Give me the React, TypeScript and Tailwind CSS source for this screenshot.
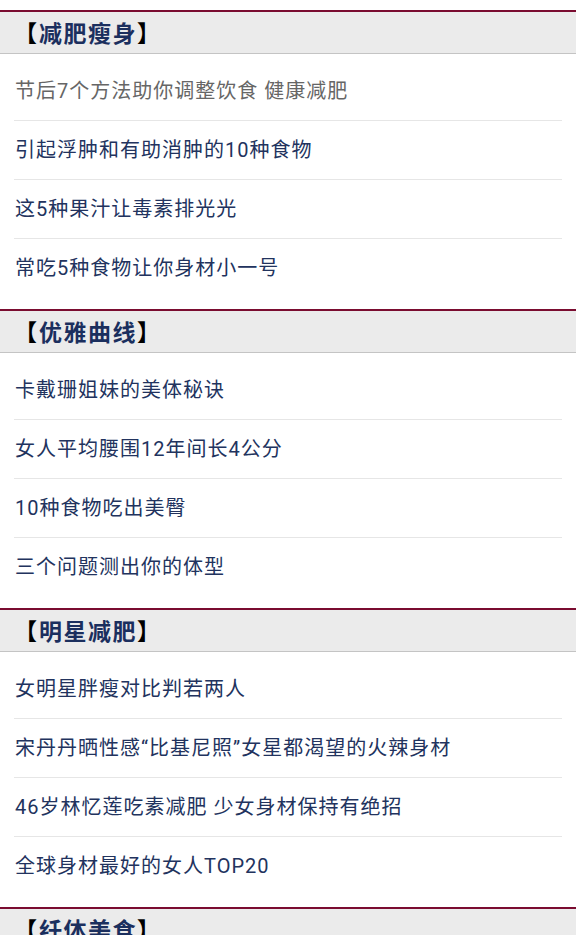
import React from "react";

const sections: { title: string; items: string[] }[] = [
  {
    title: "减肥瘦身",
    items: [
      "节后7个方法助你调整饮食 健康减肥",
      "引起浮肿和有助消肿的10种食物",
      "这5种果汁让毒素排光光",
      "常吃5种食物让你身材小一号",
    ],
  },
  {
    title: "优雅曲线",
    items: [
      "卡戴珊姐妹的美体秘诀",
      "女人平均腰围12年间长4公分",
      "10种食物吃出美臀",
      "三个问题测出你的体型",
    ],
  },
  {
    title: "明星减肥",
    items: [
      "女明星胖瘦对比判若两人",
      "宋丹丹晒性感“比基尼照”女星都渴望的火辣身材",
      "46岁林忆莲吃素减肥 少女身材保持有绝招",
      "全球身材最好的女人TOP20",
    ],
  },
  {
    title: "纤体美食",
    items: ["减肥食谱", "瘦身汤品", "低卡零食", "健康早餐"],
  },
];

export default function App() {
  return (
    <div
      className="w-[576px] h-[935px] overflow-hidden bg-white pt-[10px]"
      style={{ fontFamily: 'Roboto, "Noto Sans CJK SC", sans-serif' }}
    >
      {sections.map((s, si) => (
        <section key={si}>
          <div className="border-t-2 border-t-[#7a0c30] border-b border-b-[#c4c4c4] bg-[#ebebeb] h-[44px] flex items-center pl-[14px]">
            <span
              className="text-[23px] font-bold leading-none text-[#1b2f5e] flex items-center whitespace-nowrap"
              style={{ fontFamily: '"Noto Sans CJK SC", sans-serif' }}
            >
              <span className="text-black">【</span>
              <span className="tracking-[1.5px] ml-[2px]">{s.title}</span>
              <span className="text-black">】</span>
            </span>
          </div>
          <ul className="px-[14px] pt-[8px] pb-[12px]">
            {s.items.map((it, i) => (
              <li
                key={i}
                className={`flex items-center pl-[1px] text-[20px] tracking-[1px] leading-none whitespace-nowrap ${
                  i < s.items.length - 1 ? "h-[59px] border-b border-b-[#e6e6e6]" : "h-[58px]"
                } ${si === 0 && i === 0 ? "text-[#666666]" : "text-[#22335e]"}`}
              >
                {it}
              </li>
            ))}
          </ul>
        </section>
      ))}
    </div>
  );
}
